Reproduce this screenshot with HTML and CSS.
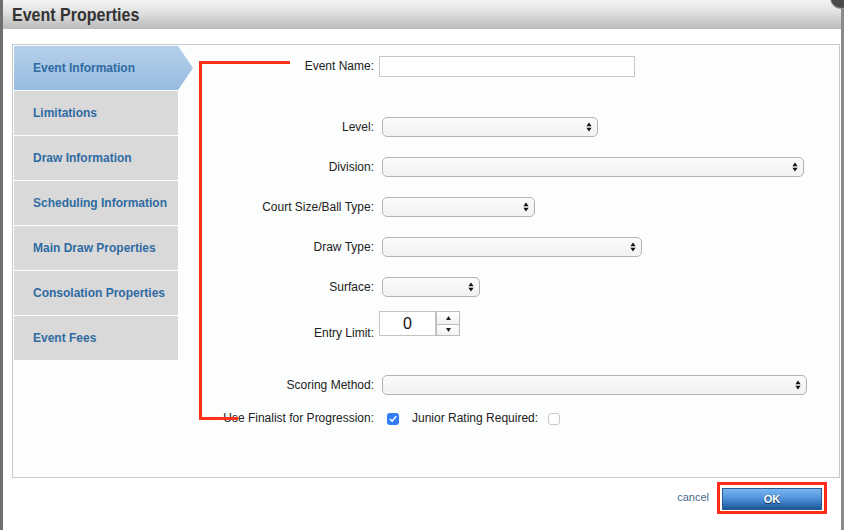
FILE: index.html
```html
<!DOCTYPE html>
<html>
<head>
<meta charset="utf-8">
<title>Event Properties</title>
<link rel="stylesheet" href="styles.css">
</head>
<body>
<div class="screen">
  <div class="backdrop-left"></div>
  <div class="dialog">
    <div class="titlebar"><span class="title">Event Properties</span></div>
    <div class="body">
      <div class="panel">
        <nav class="nav">
          <div class="nav-item active">Event Information</div>
          <div class="nav-item">Limitations</div>
          <div class="nav-item">Draw Information</div>
          <div class="nav-item">Scheduling Information</div>
          <div class="nav-item">Main Draw Properties</div>
          <div class="nav-item">Consolation Properties</div>
          <div class="nav-item">Event Fees</div>
        </nav>
        <div class="form">
          <div class="row r-name">
            <span class="lbl">Event Name:</span>
            <span class="text-input"></span>
          </div>
          <div class="row r-sel r-first">
            <span class="lbl">Level:</span>
            <span class="sel w-level"><svg class="arr" width="6" height="10" viewBox="0 0 6 10"><path d="M0.4 4.2 L3 0.6 L5.6 4.2 Z M0.4 5.8 L3 9.4 L5.6 5.8 Z"/></svg></span>
          </div>
          <div class="row r-sel">
            <span class="lbl">Division:</span>
            <span class="sel w-division"><svg class="arr" width="6" height="10" viewBox="0 0 6 10"><path d="M0.4 4.2 L3 0.6 L5.6 4.2 Z M0.4 5.8 L3 9.4 L5.6 5.8 Z"/></svg></span>
          </div>
          <div class="row r-sel">
            <span class="lbl">Court Size/Ball Type:</span>
            <span class="sel w-court"><svg class="arr" width="6" height="10" viewBox="0 0 6 10"><path d="M0.4 4.2 L3 0.6 L5.6 4.2 Z M0.4 5.8 L3 9.4 L5.6 5.8 Z"/></svg></span>
          </div>
          <div class="row r-sel">
            <span class="lbl">Draw Type:</span>
            <span class="sel w-draw"><svg class="arr" width="6" height="10" viewBox="0 0 6 10"><path d="M0.4 4.2 L3 0.6 L5.6 4.2 Z M0.4 5.8 L3 9.4 L5.6 5.8 Z"/></svg></span>
          </div>
          <div class="row r-sel">
            <span class="lbl">Surface:</span>
            <span class="sel w-surface"><svg class="arr" width="6" height="10" viewBox="0 0 6 10"><path d="M0.4 4.2 L3 0.6 L5.6 4.2 Z M0.4 5.8 L3 9.4 L5.6 5.8 Z"/></svg></span>
          </div>
          <div class="row r-entry">
            <span class="lbl lbl-entry">Entry Limit:</span>
            <span class="num-input">0</span>
            <span class="spin">
              <span class="spin-btn up"><svg width="5" height="4" viewBox="0 0 5 4"><path d="M0 4 L2.5 0 L5 4 Z"/></svg></span>
              <span class="spin-btn down"><svg width="5" height="4" viewBox="0 0 5 4"><path d="M0 0 L2.5 4 L5 0 Z"/></svg></span>
            </span>
          </div>
          <div class="row r-sel r-scoring">
            <span class="lbl">Scoring Method:</span>
            <span class="sel w-scoring"><svg class="arr" width="6" height="10" viewBox="0 0 6 10"><path d="M0.4 4.2 L3 0.6 L5.6 4.2 Z M0.4 5.8 L3 9.4 L5.6 5.8 Z"/></svg></span>
          </div>
          <div class="row r-check">
            <span class="lbl">Use Finalist for Progression:</span>
            <span class="cb checked"><svg width="12" height="12" viewBox="0 0 12 12"><path d="M3.2 6.3 L5.1 8.3 L8.9 3.6" fill="none" stroke="#fff" stroke-width="1.5" stroke-linecap="round" stroke-linejoin="round"/></svg></span>
            <span class="inline-lbl">Junior Rating Required:</span>
            <span class="cb"></span>
          </div>
        </div>
        <svg class="annot" width="300" height="400" viewBox="0 0 300 400"><path d="M277 17.5 L187.5 17.5 L187.5 373.5 L225 373.5" fill="none" stroke="#ff3119" stroke-width="3"/></svg>
      </div>
      <div class="footer">
        <a class="cancel">cancel</a>
        <span class="ok-wrap"><span class="ok">OK</span></span>
      </div>
    </div>
  </div>
  <div class="edge-right"></div>
  <div class="close-btn"></div>
</div>
</body>
</html>
```
FILE: styles.css
```css
html, body {
  margin: 0;
  padding: 0;
}
body {
  width: 844px;
  height: 530px;
  overflow: hidden;
  background: #777;
  font-family: "Liberation Sans", Arial, sans-serif;
  color: #222;
}
.screen {
  display: flex;
  height: 530px;
  position: relative;
}
.backdrop-left {
  width: 3px;
  background: #6f6f6f;
}
.edge-right {
  width: 3px;
  background: #8a8a8a;
}
.dialog {
  width: 838px;
  background: #fff;
  display: flex;
  flex-direction: column;
}
.titlebar {
  height: 29px;
  box-sizing: border-box;
  padding-left: 9px;
  display: flex;
  align-items: center;
  background: linear-gradient(#f4f4f4, #e2e2e2 40%, #bababa);
}
.title {
  display: inline-block;
  font-family: "Liberation Sans", Arial, sans-serif;
  font-weight: bold;
  font-size: 18px;
  color: #333;
  padding-top: 1px;
  transform: scaleX(0.89);
  transform-origin: left center;
  white-space: nowrap;
}
.body {
  padding: 15px 0 0 9px;
  display: flex;
  flex-direction: column;
  flex: 1;
}
.panel {
  width: 828px;
  height: 434px;
  box-sizing: border-box;
  border: 1px solid #c9c9c9;
  background: #fcfdfd;
  padding: 1px 0 0 1px;
  display: flex;
  position: relative;
}
.nav {
  width: 164px;
  flex: none;
  display: flex;
  flex-direction: column;
  gap: 1px;
}
.nav-item {
  height: 44px;
  width: 164px;
  box-sizing: border-box;
  padding-left: 19px;
  padding-bottom: 1px;
  display: flex;
  align-items: center;
  background: #d9d9d9;
  color: #2f6ba2;
  font-weight: bold;
  font-size: 12px;
}
.nav-item.active {
  width: 179px;
  background: linear-gradient(#b5d0ea, #97bbe1);
  clip-path: polygon(0 0, 164px 0, 100% 50%, 164px 100%, 0 100%);
}
.form {
  flex: 1;
  display: flex;
  flex-direction: column;
  padding-top: 10px;
}
.row {
  display: flex;
  align-items: center;
  font-size: 12px;
}
.lbl {
  width: 196px;
  flex: none;
  text-align: right;
  color: #222;
  white-space: nowrap;
  margin-top: -1px;
}
.r-name {
  height: 21px;
}
.text-input {
  margin-left: 5px;
  width: 256px;
  height: 21px;
  box-sizing: border-box;
  border: 1px solid #c6c6c6;
  background: #fff;
}
.r-sel {
  height: 40px;
}
.r-first {
  margin-top: 30px;
}
.sel {
  margin-left: 8px;
  height: 20px;
  box-sizing: border-box;
  border: 1px solid #b3b3b3;
  border-radius: 5px;
  background: linear-gradient(#fbfbfb, #f2f2f2);
  display: flex;
  align-items: center;
  justify-content: flex-end;
  padding-right: 5px;
}
.arr path {
  fill: #111;
}
.w-level { width: 216px; }
.w-division { width: 422px; }
.w-court { width: 153px; }
.w-draw { width: 260px; }
.w-surface { width: 98px; }
.w-scoring { width: 425px; }
.r-entry {
  height: 30px;
  align-items: flex-end;
}
.lbl-entry {
  margin-bottom: -3px;
}
.num-input {
  margin-left: 5px;
  margin-bottom: 1px;
  width: 57px;
  height: 25px;
  box-sizing: border-box;
  border: 1px solid #c4c4c4;
  background: #fff;
  display: flex;
  align-items: center;
  justify-content: center;
  font-size: 16px;
  color: #111;
}
.spin {
  margin-bottom: 1px;
  width: 24px;
  height: 25px;
  box-sizing: border-box;
  border: 1px solid #bdbdbd;
  display: flex;
  flex-direction: column;
  background: #fff;
}
.spin-btn {
  display: flex;
  align-items: center;
  justify-content: center;
  background: linear-gradient(#ffffff, #f1f1f1);
}
.spin-btn path {
  fill: #222;
}
.spin-btn.up {
  height: 12px;
  border-bottom: 1px solid #bdbdbd;
}
.spin-btn.down {
  flex: 1;
}
.r-scoring {
  margin-top: 28px;
}
.r-check {
  height: 27px;
}
.cb {
  width: 12px;
  height: 12px;
  box-sizing: border-box;
  border: 1px solid #c9c9c9;
  border-radius: 3px;
  background: #fff;
  margin-left: 10px;
  display: flex;
}
.cb.checked {
  margin-left: 13px;
  border: none;
  background: #2f7cf5;
}
.inline-lbl {
  margin-left: 13px;
  color: #222;
  white-space: nowrap;
  margin-top: -1px;
}
.annot {
  position: absolute;
  left: 0;
  top: 0;
  pointer-events: none;
}
.footer {
  display: flex;
  justify-content: flex-end;
  align-items: center;
  padding: 4px 14px 0 0;
  height: 32px;
}
.cancel {
  font-size: 11px;
  color: #4a6b8c;
  margin-right: 8px;
  margin-top: -2px;
}
.ok-wrap {
  border: 3px solid #ff2d17;
  padding: 3px 2px 1px 2px;
  display: flex;
  background: #fff;
}
.ok {
  width: 100px;
  height: 22px;
  box-sizing: border-box;
  border: 1px solid #2a5c92;
  background: linear-gradient(#79b6f2, #4d90d8 50%, #2a68ad 85%, #1e5596);
  color: #fff;
  font-weight: bold;
  font-size: 11px;
  text-shadow: 0 1px 1px #0d2a4a;
  display: flex;
  align-items: center;
  justify-content: center;
}
.close-btn {
  position: absolute;
  left: 831px;
  top: -12px;
  width: 20px;
  height: 20px;
  border-radius: 50%;
  background: #4a4a4a;
  box-shadow: 0 0 0 1px #999;
}
```
